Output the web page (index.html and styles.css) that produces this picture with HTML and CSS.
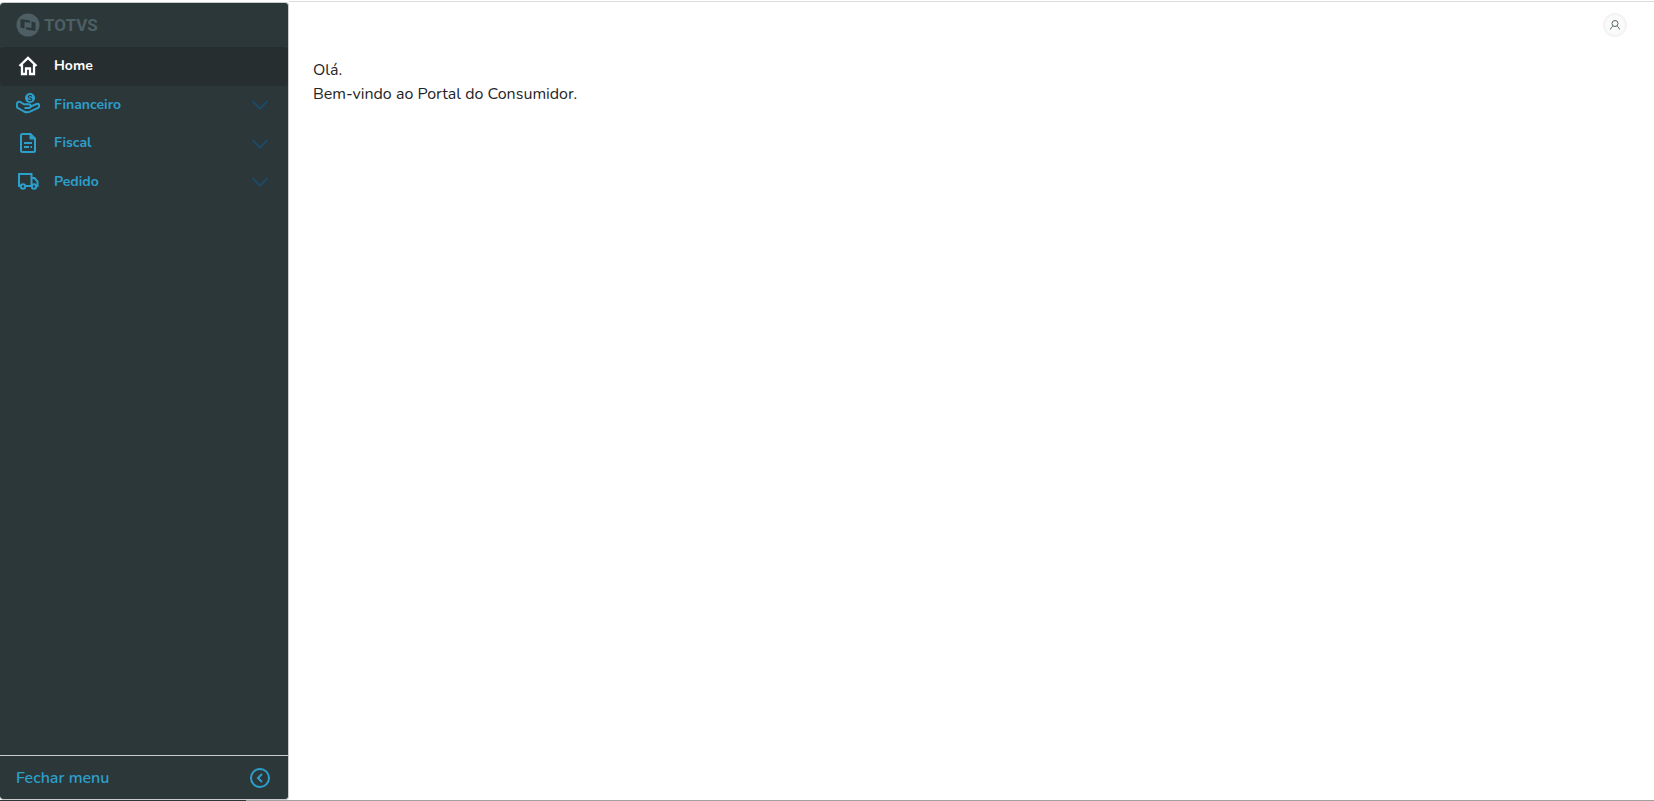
FILE: index.html
```html
<!DOCTYPE html>
<html lang="pt-BR">
<head>
<meta charset="utf-8">
<title>Portal do Consumidor</title>
<link rel="stylesheet" href="styles.css">
</head>
<body>
<div class="app">
  <aside class="sidebar">
    <div class="brand">
      <svg class="brand-mark" viewBox="0 0 24 24" aria-hidden="true">
        <circle cx="12" cy="12" r="11.500" fill="currentColor"/>
        <path fill="#2c3739" d="M4.500 6 14 7.500V9.700L8.500 9V15.500L4.500 14.500ZM19.500 18 10 16.500V14.300L15.500 15V8.500L19.500 9.500Z"/>
      </svg>
      <span>TOTVS</span>
    </div>
    <nav class="menu">
      <a class="item active" href="#home">
        <svg class="icon" viewBox="0 0 24 24"><path d="M3.500 12 12 3.800 20.500 12M6 10.500V20H10V14.500H14V20H18V10.500" stroke-width="2.300"/></svg>
        <span class="label">Home</span>
      </a>
      <a class="item" href="#financeiro">
        <svg class="icon" viewBox="0 0 24 24"><circle cx="14" cy="6" r="5" fill="currentColor" stroke="none"/><path d="M15.900 4.500C15.300 3 12.300 3.200 12.300 4.700 12.300 6.400 15.900 5.600 15.900 7.400 15.900 9 12.600 9 12.100 7.500" stroke="#2c3739" stroke-width="1.100"/><path d="M3.500 9.500C.500 9.500.500 12.500 1.200 15.500L8 19.500C10 20.600 12 20.600 14 19.700L22 16C24.500 13.500 23 11.300 20.500 12L15 14.300M3.500 9.500 8 12.300H12.500C15.500 12.500 15.500 16 12.500 16H8.500" stroke-width="2"/></svg>
        <span class="label">Financeiro</span>
        <svg class="chevron" viewBox="0 0 18 10"><path d="M1.500 1 9 8.500 16.500 1"/></svg>
      </a>
      <a class="item" href="#fiscal">
        <svg class="icon" viewBox="0 0 24 24"><path d="M14.500 3H6.500Q5 3 5 4.500V19.500Q5 21 6.500 21H17.500Q19 21 19 19.500V7.500Z"/><path d="M14 3V8H19Z" fill="currentColor" stroke-width="1"/><path d="M8 12H16M8 16H13M14.500 16H16"/></svg>
        <span class="label">Fiscal</span>
        <svg class="chevron" viewBox="0 0 18 10"><path d="M1.500 1 9 8.500 16.500 1"/></svg>
      </a>
      <a class="item" href="#pedido">
        <svg class="icon" viewBox="0 0 24 24"><path d="M5 17H3V5H15.500V17H9.500M15.500 9H18.500L21.500 12.500V17H20M15.500 17H16"/><circle cx="7" cy="17.500" r="2.200"/><circle cx="18" cy="17.500" r="2.200"/></svg>
        <span class="label">Pedido</span>
        <svg class="chevron" viewBox="0 0 18 10"><path d="M1.500 1 9 8.500 16.500 1"/></svg>
      </a>
    </nav>
    <button class="collapse" type="button">
      <span>Fechar menu</span>
      <svg class="collapse-icon" viewBox="0 0 20 20" aria-hidden="true"><circle cx="10" cy="10" r="9"/><path d="M12 6 8 10 12 14"/></svg>
    </button>
  </aside>
  <div class="page">
    <header class="topbar">
      <button class="avatar" type="button" aria-label="Perfil do usuário">
        <svg viewBox="0 0 12 12"><circle cx="6" cy="4.500" r="3"/><path d="M1.500 10.500C2 8.500 3 7.500 4.200 7.200M10.500 10.500C10 8.500 9 7.500 7.800 7.200"/></svg>
      </button>
    </header>
    <main class="content">
      <p>Olá.</p>
      <p>Bem-vindo ao Portal do Consumidor.</p>
    </main>
  </div>
</div>
</body>
</html>
```
FILE: styles.css
```css
* {
  box-sizing: border-box;
}

body {
  margin: 0;
  background: #fff;
  color: #1f2627;
  font-family: Nunito, "Noto Sans", sans-serif;
}

.app {
  display: flex;
  min-height: 100vh;
  padding: 1px 0;
  background: linear-gradient(90deg, #2c3739 246px, #a0a0a0 246px) bottom / 100% 1px no-repeat;
}

.sidebar {
  display: flex;
  flex-direction: column;
  flex: 0 0 289px;
  margin-top: 1px;
  background: #2c3739;
  border: 1px solid #c9cccc;
  border-left: 0;
  border-radius: 4px;
}

.brand {
  display: flex;
  align-items: center;
  gap: 4px;
  height: 44px;
  padding-left: 16px;
  color: #4d5f64;
  font: 700 17px Roboto, sans-serif;
}

.brand-mark {
  width: 24px;
  height: 24px;
}

.menu {
  display: grid;
  grid-auto-rows: 1fr;
  height: 154px;
}

.item {
  display: flex;
  align-items: center;
  padding: 0 19px 1px 16px;
  color: #2c9fcb;
  font-size: 14px;
  font-weight: 700;
  text-decoration: none;
}

.active {
  background: #272e30;
  border-radius: 4px;
  color: #fff;
}

.icon,
.chevron,
.collapse-icon,
.avatar svg {
  fill: none;
  stroke: currentColor;
}

.icon {
  width: 24px;
  height: 24px;
  stroke-width: 2;
}

.label {
  flex: 1;
  padding-left: 14px;
}

.chevron {
  width: 18px;
  height: 10px;
  margin-top: 2px;
  color: #1c4a64;
  stroke-width: 2;
}

.collapse {
  display: flex;
  align-items: center;
  justify-content: space-between;
  height: 44px;
  margin-top: auto;
  padding: 0 18px 0 16px;
  background: transparent;
  border: 0;
  border-top: 1px solid #c9cccc;
  color: #2c9fcb;
  font-family: Nunito, "Noto Sans", sans-serif;
  font-size: 16px;
  font-weight: 600;
}

.collapse-icon {
  width: 20px;
  height: 20px;
  stroke-width: 2;
}

.page {
  flex: 1;
  border-top: 1px solid #dcdcdc;
}

.topbar {
  display: flex;
  justify-content: flex-end;
  padding: 11px 27px 0 0;
}

.avatar {
  display: flex;
  align-items: center;
  justify-content: center;
  width: 24px;
  height: 24px;
  padding: 0;
  background: #fafafa;
  border: 2px solid #f3f3f3;
  border-radius: 50%;
  color: #55666a;
}

.avatar svg {
  width: 12px;
  height: 12px;
  stroke-width: 1;
}

.content {
  padding: 21px 24px;
  font-size: 16px;
  line-height: 24px;
}

.content p {
  margin: 0;
}
```
